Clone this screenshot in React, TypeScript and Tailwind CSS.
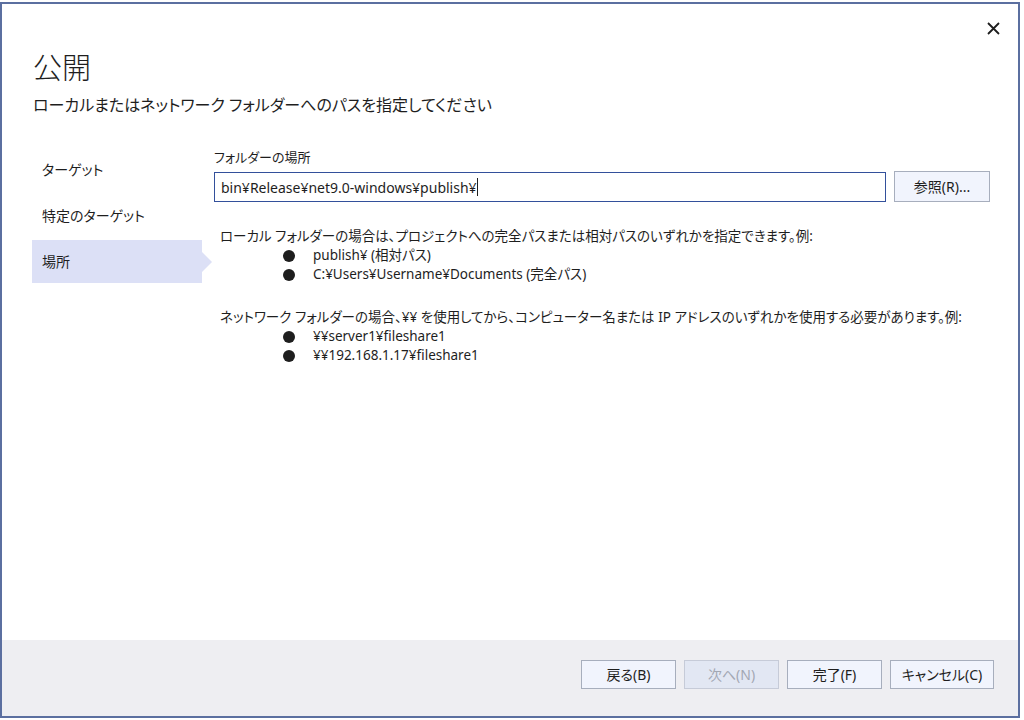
import React from 'react';

const font = { fontFamily: '"Noto Sans", "Noto Sans CJK JP", sans-serif' };

const NavItem = ({ label, active }: { label: string; active?: boolean }) => (
    <div className="relative">
        <div
            className={`h-[43px] w-[170px] flex items-center pl-[10px] text-[14px] text-[#1e1e1e] ${active ? 'bg-[#dce0f6]' : ''}`}
        >
            {label}
        </div>
        {active && (
            <div className="absolute left-[170px] top-[12px] w-0 h-0 border-y-[10px] border-y-transparent border-l-[10px] border-l-[#dce0f6]"></div>
        )}
    </div>
);

const Bullet = ({ text }: { text: string }) => (
    <div className="flex items-center h-[19px] pl-[63px]">
        <span className="w-[12px] h-[12px] rounded-full bg-[#1e1e1e] inline-block"></span>
        <span className="ml-[18px]">{text}</span>
    </div>
);

const FooterButton = ({ label, disabled, wide }: { label: string; disabled?: boolean; wide?: boolean }) => (
    <button
        className={`h-[29px] ${wide ? 'w-[104px]' : 'w-[95px]'} border text-[14px] ${disabled ? 'bg-[#e2e7f3] border-[#c6cbd8] text-[#a3a8b3]' : 'bg-[#f1f4fd] border-[#a7aebd] text-[#1e1e1e]'}`}
    >
        {label}
    </button>
);

export default function App() {
    return (
        <div className="w-[1024px] h-[720px] bg-white pt-[2px] [font-feature-settings:'palt']" style={font}>
            <div className="w-[1020px] h-[716px] border-2 border-[#5b6fa0] flex flex-col bg-white">
                <div className="flex-1 relative">
                    <button className="absolute right-[15px] top-[14px] w-[20px] h-[20px] flex items-center justify-center">
                        <svg width="13" height="13" viewBox="0 0 13 13">
                            <path d="M1 1 L12 12 M12 1 L1 12" stroke="#1e1e1e" strokeWidth="1.8" />
                        </svg>
                    </button>

                    <div className="pl-[31px] pt-[44px]">
                        <h1 className="text-[29px] font-light leading-[40px] text-[#1e1e1e]">公開</h1>
                        <p className="mt-[6px] text-[16px] leading-[22px] text-[#1e1e1e]">
                            ローカルまたはネットワーク フォルダーへのパスを指定してください
                        </p>
                    </div>

                    <div className="flex mt-[32px]">
                        <div className="pl-[30px] flex flex-col gap-[3px]">
                            <NavItem label="ターゲット" />
                            <NavItem label="特定のターゲット" />
                            <NavItem label="場所" active />
                        </div>

                        <div className="ml-[12px] flex-1">
                            <div className="text-[13px] leading-[18px] text-[#1e1e1e]">フォルダーの場所</div>
                            <div className="flex mt-[6px] items-start">
                                <div className="w-[672px] h-[30px] border border-[#33509b] flex items-center pl-[6px] text-[14px] text-[#1e1e1e]">
                                    bin¥Release¥net9.0-windows¥publish¥
                                    <span className="w-px h-[18px] bg-[#1e1e1e] inline-block"></span>
                                </div>
                                <button className="ml-[8px] w-[96px] h-[31px] -mt-[1px] bg-[#f1f4fd] border border-[#a7aebd] text-[14px] text-[#1e1e1e]">
                                    参照(R)...
                                </button>
                            </div>

                            <div className="mt-[25px] pl-[6px] text-[13.5px] leading-[19px] text-[#1e1e1e] whitespace-nowrap">
                                <div>ローカル フォルダーの場合は、プロジェクトへの完全パスまたは相対パスのいずれかを指定できます。例:</div>
                                <Bullet text="publish¥ (相対パス)" />
                                <Bullet text="C:¥Users¥Username¥Documents (完全パス)" />
                                <div className="mt-[24px]">
                                    ネットワーク フォルダーの場合、¥¥ を使用してから、コンピューター名または IP アドレスのいずれかを使用する必要があります。例:
                                </div>
                                <Bullet text="¥¥server1¥fileshare1" />
                                <Bullet text="¥¥192.168.1.17¥fileshare1" />
                            </div>
                        </div>
                    </div>
                </div>

                <div className="h-[76px] bg-[#eeeef2] flex items-start justify-end gap-[8px] pt-[20px] pr-[24px]">
                    <FooterButton label="戻る(B)" />
                    <FooterButton label="次へ(N)" disabled />
                    <FooterButton label="完了(F)" />
                    <FooterButton label="キャンセル(C)" wide />
                </div>
            </div>
        </div>
    );
}
